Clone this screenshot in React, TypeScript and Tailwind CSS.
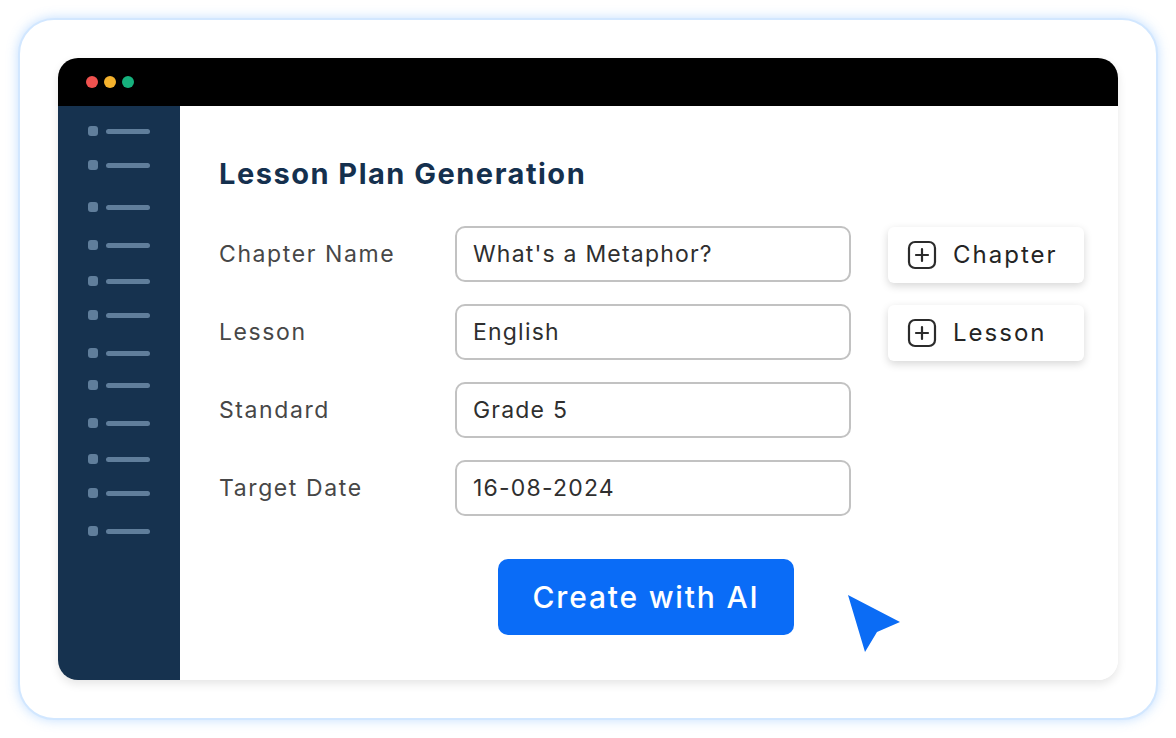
import React from 'react';

const FONT = "font-['Inter','Liberation_Sans',sans-serif]";

// gaps before each sidebar entry (px), first one is from the top of the sidebar
const NAV_MARGINS = [
  'mt-[20px]', 'mt-[24px]', 'mt-[32px]', 'mt-[28px]', 'mt-[26px]', 'mt-[24px]',
  'mt-[28px]', 'mt-[22px]', 'mt-[28px]', 'mt-[26px]', 'mt-[24px]', 'mt-[28px]',
];

const FIELDS = [
  { label: 'Chapter Name', value: "What's a Metaphor?", action: 'Chapter' },
  { label: 'Lesson', value: 'English', action: 'Lesson' },
  { label: 'Standard', value: 'Grade 5', action: null },
  { label: 'Target Date', value: '16-08-2024', action: null },
];

function PlusSquare() {
  return (
    <svg width="30" height="30" viewBox="0 0 30 30" fill="none" stroke="#2b2b2b" strokeWidth="2.2" strokeLinecap="round">
      <rect x="2" y="2" width="26" height="26" rx="6" />
      <path d="M15 9v12M9 15h12" />
    </svg>
  );
}

export default function App() {
  return (
    <div className={`w-[1176px] h-[738px] bg-white p-[18px] ${FONT}`}>
      <div className="h-full rounded-[36px] border-2 border-[#d2e7ff] bg-white p-[38px] shadow-[0_0_12px_rgba(80,160,255,0.35)]">
        <div className="h-full flex flex-col rounded-[20px] overflow-hidden shadow-[0_4px_10px_rgba(0,0,0,0.10)]">
          {/* title bar */}
          <div className="h-[48px] shrink-0 bg-black flex items-center gap-[6px] pl-[28px]">
            <span className="w-[12px] h-[12px] rounded-full bg-[#f0524f]" />
            <span className="w-[12px] h-[12px] rounded-full bg-[#f5b22d]" />
            <span className="w-[12px] h-[12px] rounded-full bg-[#16b17d]" />
          </div>

          <div className="flex flex-1 min-h-0">
            {/* sidebar */}
            <aside className="w-[122px] shrink-0 bg-[#16324f] flex flex-col pl-[30px]">
              {NAV_MARGINS.map((m, i) => (
                <div key={i} className={`${m} flex items-center gap-[8px] h-[10px]`}>
                  <span className="w-[10px] h-[10px] rounded-[3px] bg-[#607e9b]" />
                  <span className="w-[44px] h-[5px] rounded-full bg-[#607e9b]" />
                </div>
              ))}
            </aside>

            {/* main */}
            <main className="relative flex-1 bg-white pl-[39px] pt-[50px]">
              <h1 className="text-[29px] leading-[36px] font-bold text-[#15304e] tracking-[1.5px]">Lesson Plan Generation</h1>

              <div className="mt-[34px] grid grid-cols-[199px_396px_196px] gap-x-[37px] gap-y-[22px] items-center">
                {FIELDS.map((f) => (
                  <React.Fragment key={f.label}>
                    <div className="text-[23px] text-[#474747] tracking-[1.6px]">{f.label}</div>
                    <div className="h-[56px] rounded-[10px] border-2 border-[#c2c2c2] flex items-center pl-[16px] text-[23px] text-[#2f2f2f] tracking-[1.2px]">
                      {f.value}
                    </div>
                    {f.action ? (
                      <button className="relative top-[1px] h-[56px] rounded-[6px] bg-white shadow-[0_3px_8px_rgba(0,0,0,0.16)] flex items-center pl-[19px] gap-[16px] text-[24px] text-[#242424] tracking-[2px]">
                        <PlusSquare />
                        {f.action}
                      </button>
                    ) : (
                      <div />
                    )}
                  </React.Fragment>
                ))}
              </div>

              <button className="mt-[43px] ml-[279px] w-[296px] h-[76px] rounded-[10px] bg-[#0a6cf7] text-white text-[30px] font-medium tracking-[1.8px]">
                Create with AI
              </button>

              {/* cursor */}
              <svg className="absolute left-[668px] top-[489px]" width="54" height="60" viewBox="0 0 54 60">
                <path d="M0 0 L52 27 L29 37 L17 57 Z" fill="#0b6cf5" strokeLinejoin="round" />
              </svg>
            </main>
          </div>
        </div>
      </div>
    </div>
  );
}
